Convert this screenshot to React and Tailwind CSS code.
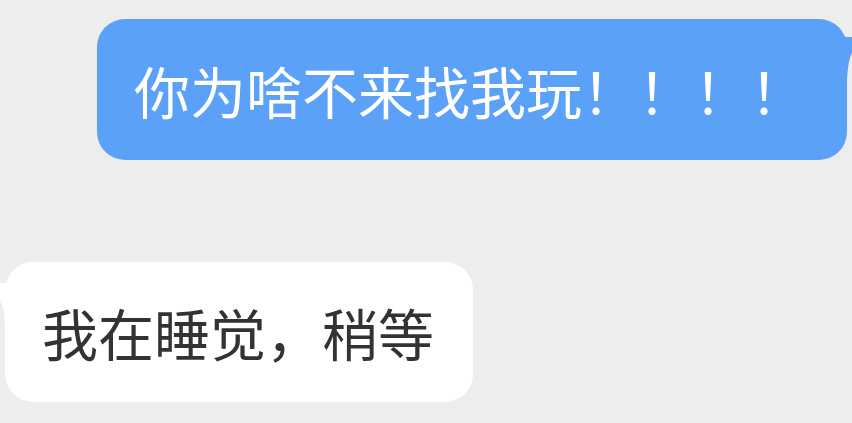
import React from 'react';

const messages = [
  { id: 1, mine: true, text: '你为啥不来找我玩！！！！' },
  { id: 2, mine: false, text: '我在睡觉，稍等' },
];

// little hook-shaped tail on the sender's bubble (top right)
function RightTail() {
  return (
    <svg
      className="absolute left-[calc(100%-9px)] top-[11px]"
      width="20"
      height="50"
      viewBox="0 0 20 50"
    >
      <path d="M0 7 L20 7 L20 14 Q10 22 9 50 L0 50 Z" fill="#5ba1f7" />
    </svg>
  );
}

// tail on the incoming bubble (top left)
function LeftTail() {
  return (
    <svg
      className="absolute left-[-10px] top-[14px]"
      width="24"
      height="50"
      viewBox="0 0 24 50"
    >
      <path d="M0 7 L24 7 L24 50 L10 50 Q10 26 0 18 Z" fill="#ffffff" />
    </svg>
  );
}

function Bubble({ mine, text }) {
  if (mine) {
    return (
      <div className="flex justify-end pr-[5px]">
        <div className="relative flex h-[141px] items-center rounded-[28px] bg-[#5ba1f7] pl-[37px] pr-[41px] text-white">
          <RightTail />
          <span className="relative whitespace-nowrap">{text}</span>
        </div>
      </div>
    );
  }
  return (
    <div className="flex justify-start pl-[5px]">
      <div className="relative flex h-[140px] items-center rounded-[28px] bg-white pl-[37px] pr-[39px] text-[#333333]">
        <LeftTail />
        <span className="relative whitespace-nowrap">{text}</span>
      </div>
    </div>
  );
}

export default function App() {
  return (
    <div className="h-screen w-full overflow-hidden bg-[#ededed] pt-[19px] font-['Noto_Sans_CJK_SC','Noto_Sans',sans-serif] text-[56px] leading-none">
      <div className="flex flex-col gap-[102px]">
        {messages.map((m) => (
          <Bubble key={m.id} mine={m.mine} text={m.text} />
        ))}
      </div>
    </div>
  );
}
